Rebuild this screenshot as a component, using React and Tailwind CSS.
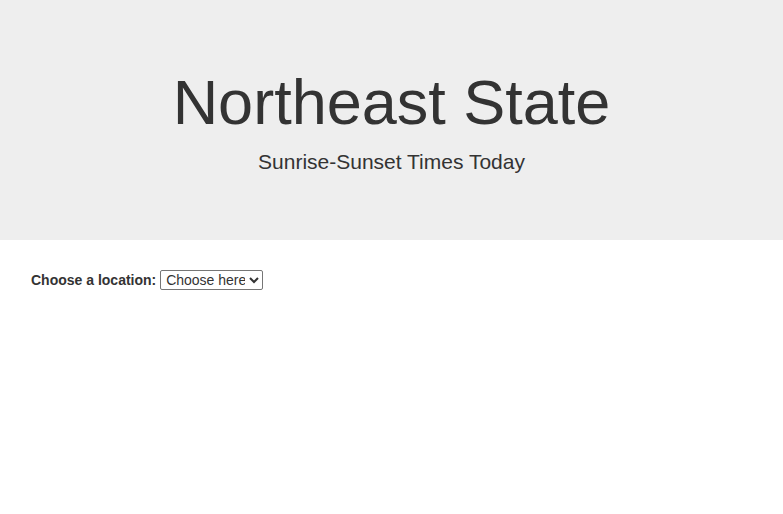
const App = () => {
  return (
    <div className="min-h-screen bg-white font-['Liberation_Sans',Arial,sans-serif] text-[#333] text-[14px] leading-[20px]">
      {/* Header */}
      <div className="bg-[#eeeeee] py-[48px] text-center">
        <h1 className="mt-[20px] mb-[10px] text-[63px] leading-[1.1] font-normal">
          Northeast State
        </h1>
        <p className="mb-[15px] text-[21px] leading-[30px] font-light">
          Sunrise-Sunset Times Today
        </p>
      </div>

      {/* Location picker */}
      <div className="mt-[30px] pl-[31px] pr-[30px]">
        <label htmlFor="location" className="font-bold">
          Choose a location:
        </label>{" "}
        <select
          id="location"
          className="h-[20px] w-[103px] border border-[#767676] rounded-[2px] bg-white text-[14px] text-[#333] font-['Liberation_Sans',Arial,sans-serif] appearance-auto px-[1px] align-top"
          defaultValue=""
        >
          <option value="">Choose here</option>
          <option value="boston">Boston</option>
          <option value="portland">Portland</option>
        </select>
      </div>
    </div>
  );
};

export default App;
